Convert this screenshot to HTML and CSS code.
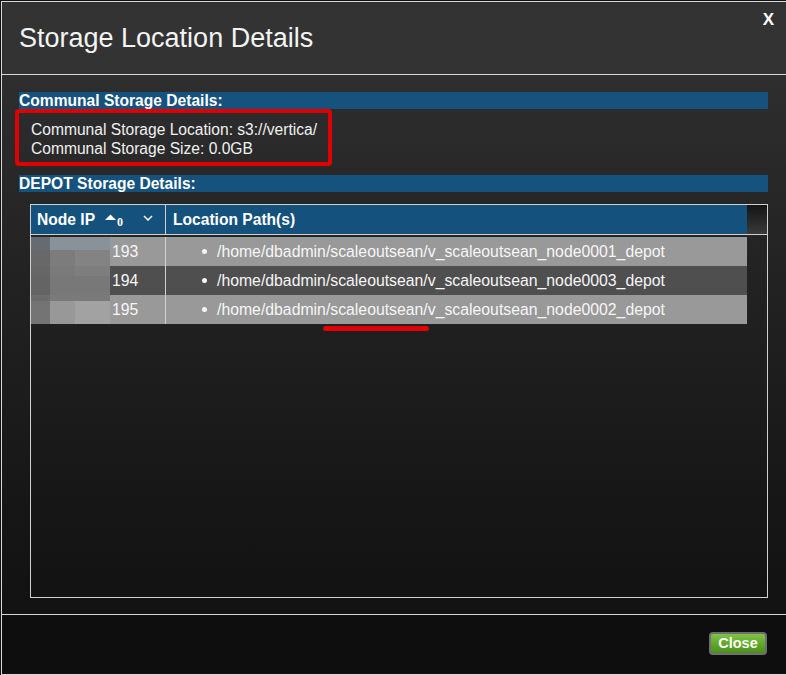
FILE: index.html
```html
<!DOCTYPE html>
<html>
<head>
<meta charset="utf-8">
<title>Storage Location Details</title>
<link rel="stylesheet" href="styles.css">
</head>
<body>
<div class="window">
  <div class="header">
    <h1 class="title">Storage Location Details</h1>
    <span class="close-x">X</span>
  </div>
  <div class="content">
    <div class="section-title">Communal Storage Details:</div>
    <div class="communal">
      <div>Communal Storage Location: s3://vertica/</div>
      <div>Communal Storage Size: 0.0GB</div>
    </div>
    <div class="section-title depot-title">DEPOT Storage Details:</div>
    <div class="grid">
      <div class="thead">
        <div class="th th-ip">
          <span>Node IP</span>
          <span class="sort">
            <svg width="11" height="6" viewBox="0 0 11 6"><polygon points="0,6 5.5,0.5 11,6" fill="#ffffff"/></svg>
            <span class="sort-num">0</span>
          </span>
          <svg class="chev" width="10" height="6" viewBox="0 0 10 6"><polyline points="1,1 5,5 9,1" fill="none" stroke="#ffffff" stroke-width="1.5"/></svg>
        </div>
        <div class="th th-path">Location Path(s)</div>
        <div class="th-scroll"></div>
      </div>
      <div class="rows">
        <div class="tr light">
          <div class="td td-ip"><span class="blur blur-1"></span><span>193</span></div>
          <div class="td td-path"><span class="bullet"></span>/home/dbadmin/scaleoutsean/v_scaleoutsean_node0001_depot</div>
        </div>
        <div class="tr dark">
          <div class="td td-ip"><span class="blur blur-2"></span><span>194</span></div>
          <div class="td td-path"><span class="bullet"></span>/home/dbadmin/scaleoutsean/v_scaleoutsean_node0003_depot</div>
        </div>
        <div class="tr light">
          <div class="td td-ip"><span class="blur blur-3"></span><span>195</span></div>
          <div class="td td-path"><span class="bullet"></span>/home/dbadmin/scaleoutsean/v_scaleoutsean_node0002_depot</div>
        </div>
      </div>
      <span class="underline-mark"></span>
    </div>
  </div>
  <div class="footer">
    <button class="close-btn">Close</button>
  </div>
</div>
</body>
</html>
```

FILE: styles.css
```css
html, body {
  margin: 0;
  padding: 0;
  background: #121212;
  font-family: "Liberation Sans", Arial, sans-serif;
  color: #f2f2f2;
}

.window {
  margin: 1px 0 0 1px;
  width: 784px;
  height: 672px;
  border-top: 1px solid #d8d8d8;
  border-left: 1px solid #d8d8d8;
  border-bottom: 1px solid #d8d8d8;
  display: flex;
  flex-direction: column;
  background: #121212;
}

.header {
  height: 72px;
  background: #333333;
  border-bottom: 1px solid #d8d8d8;
  display: flex;
  justify-content: space-between;
  align-items: flex-start;
  padding: 0 12px 0 17px;
}

.title {
  margin: 0;
  padding-top: 21px;
  font-size: 27px;
  line-height: 30px;
  font-weight: normal;
  color: #f4f4f4;
}

.close-x {
  margin-top: 8px;
  font-size: 17px;
  line-height: 20px;
  font-weight: bold;
  color: #ffffff;
}

.content {
  height: 540px;
  background: linear-gradient(to bottom, #2e2e2e 0%, #232323 35%, #161616 80%, #121212 100%);
  border-bottom: 1px solid #d8d8d8;
  padding: 17px 18px 0 17px;
  box-sizing: border-box;
  display: flex;
  flex-direction: column;
}

.section-title {
  height: 17px;
  line-height: 17px;
  background: #15527d;
  font-weight: bold;
  font-size: 15.6px;
  color: #ffffff;
  white-space: nowrap;
}

.communal {
  margin-left: -4px;
  width: 317px;
  box-sizing: border-box;
  border: 4px solid #e00000;
  border-radius: 4px;
  padding: 7px 0 4px 12px;
  font-size: 15.6px;
  line-height: 19px;
  color: #f0f0f0;
}

.depot-title {
  margin-top: 9px;
}

.grid {
  position: relative;
  margin: 12px 0 0 11px;
  height: 394px;
  box-sizing: border-box;
  border: 1px solid #d0d0d0;
}

.thead {
  display: flex;
  height: 29px;
  border-bottom: 1px solid #d0d0d0;
}

.th {
  background: #14517c;
  font-weight: bold;
  font-size: 15.6px;
  line-height: 29px;
  color: #ffffff;
  box-sizing: border-box;
}

.th-ip {
  width: 135px;
  border-right: 1px solid #d0d0d0;
  padding-left: 6px;
  display: flex;
  align-items: center;
}

.sort {
  display: flex;
  align-items: flex-start;
  margin-left: 10px;
  margin-top: 2px;
}

.sort svg {
  margin-top: 1px;
}

.sort-num {
  font-family: "Liberation Serif", "Times New Roman", serif;
  font-weight: bold;
  font-size: 12px;
  line-height: 12px;
  margin-top: 3px;
  margin-left: 1px;
}

.chev {
  margin-left: auto;
  margin-right: 12px;
  margin-top: -3px;
}

.th-path {
  width: 581px;
  padding-left: 7px;
}

.th-scroll {
  flex: 1;
  background: linear-gradient(to bottom, #141414, #3a3a3a);
}

.rows {
  margin-top: 2px;
}

.tr {
  display: flex;
  width: 716px;
  height: 29px;
  font-size: 15.8px;
  line-height: 29px;
  color: #f6f6f6;
}

.tr.light {
  background: #999999;
}

.tr.dark {
  background: #4f4f4f;
}

.td {
  box-sizing: border-box;
  white-space: nowrap;
}

.td-ip {
  width: 135px;
  border-right: 1px solid #d0d0d0;
  display: flex;
  align-items: center;
}

.blur {
  display: block;
  width: 79px;
  height: 29px;
  margin-right: 2px;
}

.blur-1 {
  background:
    linear-gradient(to right, #666b71 0 19px, #8a9299 19px 79px) top / 79px 13px no-repeat,
    linear-gradient(to right, #686868 0 19px, #7c7c7c 19px 44px, #838383 44px 79px) bottom / 79px 16px no-repeat;
}

.blur-2 {
  background:
    linear-gradient(to right, #666666 0 19px, #7a7a7a 19px 44px, #7e7e7e 44px 79px) top / 79px 10px no-repeat,
    linear-gradient(to right, #646464 0 19px, #787878 19px 79px) bottom / 79px 19px no-repeat;
}

.blur-3 {
  background:
    linear-gradient(to right, #6c6c6c 0 19px, #7a7a7a 19px 79px) top / 79px 6px no-repeat,
    linear-gradient(to right, #747474 0 19px, #989898 19px 44px, #a2a2a2 44px 79px) bottom / 79px 23px no-repeat;
}

.td-path {
  width: 581px;
  display: flex;
  align-items: center;
}

.bullet {
  width: 5px;
  height: 5px;
  border-radius: 50%;
  background: #f6f6f6;
  margin-left: 36px;
  margin-right: 10px;
}

.underline-mark {
  position: absolute;
  left: 292px;
  top: 121px;
  width: 106px;
  height: 5px;
  border-radius: 3px;
  background: #e00000;
}

.footer {
  height: 58px;
  background: #0e0e0e;
  display: flex;
  justify-content: flex-end;
  align-items: flex-start;
  padding: 17px 19px 0 0;
  box-sizing: border-box;
}

.close-btn {
  width: 58px;
  height: 23px;
  border: 2px solid #6f6f6f;
  border-radius: 4px;
  background: linear-gradient(to bottom, #80c447 0%, #62a92b 50%, #4d8e1a 100%);
  color: #ffffff;
  font-family: "Liberation Sans", Arial, sans-serif;
  font-weight: bold;
  font-size: 14.5px;
  line-height: 17px;
  padding: 0;
}
```
